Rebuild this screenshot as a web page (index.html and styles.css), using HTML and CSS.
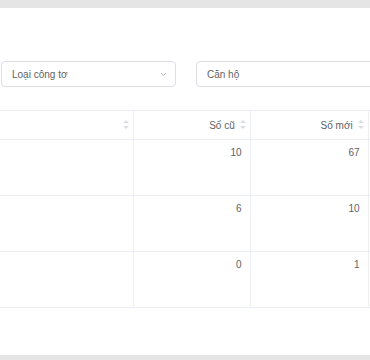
FILE: index.html
```html
<!DOCTYPE html>
<html lang="vi">
<head>
  <meta charset="UTF-8" />
  <meta name="viewport" content="width=device-width, initial-scale=1.0" />
  <title>Chỉ số công tơ</title>
  <link rel="stylesheet" href="styles.css">
</head>
<body>
  <div class="card">
    <div class="filters">
      <div class="select">
        <span>Loại công tơ</span>
        <svg class="chevron" width="7" height="5" viewBox="0 0 7 5"><path d="M1 1 L3.5 3.5 L6 1" fill="none" stroke="#b4b8bf" stroke-width="1"/></svg>
      </div>
      <div class="select">
        <span>Căn hộ</span>
      </div>
    </div>

    <table class="bang">
      <colgroup>
        <col class="c1"><col class="c2"><col class="c3"><col class="c4">
      </colgroup>
      <thead>
        <tr>
          <th><span class="sort"></span></th>
          <th>Số cũ <span class="sort"></span></th>
          <th>Số mới <span class="sort"></span></th>
          <th></th>
        </tr>
      </thead>
      <tbody>
        <tr><td></td><td>10</td><td>67</td><td></td></tr>
        <tr><td></td><td>6</td><td>10</td><td></td></tr>
        <tr><td></td><td>0</td><td>1</td><td></td></tr>
      </tbody>
    </table>
  </div>
</body>
</html>
```

FILE: styles.css
```css
html, body {
  height: 100%;
}

body {
  margin: 0;
  background-color: #e5e5e5;
  font-family: 'Liberation Sans', Arial, sans-serif;
  font-size: 10px;
  color: #606266;
  overflow: hidden;
}

.card {
  margin-top: 8px;
  height: 347px;
  background-color: #fff;
  padding-top: 53px;
  box-sizing: border-box;
  overflow: hidden;
}

.filters {
  display: flex;
  gap: 20px;
  padding-left: 1px;
}

.select {
  flex: 0 0 175px;
  height: 26px;
  box-sizing: border-box;
  border: 1px solid #dcdfe6;
  border-radius: 4px;
  display: flex;
  align-items: center;
  justify-content: space-between;
  padding: 0 8px 0 10px;
  color: #606266;
}

.select + .select {
  flex-basis: 200px;
}

.chevron {
  display: block;
}

.bang {
  margin-top: 23px;
  width: 488px;
  table-layout: fixed;
  border-collapse: collapse;
}

.c1 { width: 133px; }
.c2 { width: 117px; }
.c3 { width: 118px; }
.c4 { width: 120px; }

.bang th,
.bang td {
  border: 1px solid #ebeef5;
  text-align: right;
  padding: 0;
}

.bang th:first-child,
.bang td:first-child {
  border-left: none;
}

.bang th {
  height: 28px;
  font-weight: normal;
  color: #606266;
  padding-right: 4px;
  white-space: nowrap;
}

.bang td {
  height: 56px;
  vertical-align: top;
  padding: 7px 8px 0 0;
  box-sizing: border-box;
}

.sort {
  display: inline-block;
  vertical-align: middle;
  width: 6px;
  height: 9px;
  margin-left: 2px;
  position: relative;
  top: -1px;
}

.sort::before,
.sort::after {
  content: "";
  position: absolute;
  left: 0;
  border-left: 3px solid transparent;
  border-right: 3px solid transparent;
}

.sort::before {
  top: 0;
  border-bottom: 3.5px solid #dadde2;
}

.sort::after {
  bottom: 0;
  border-top: 3.5px solid #dadde2;
}
```
